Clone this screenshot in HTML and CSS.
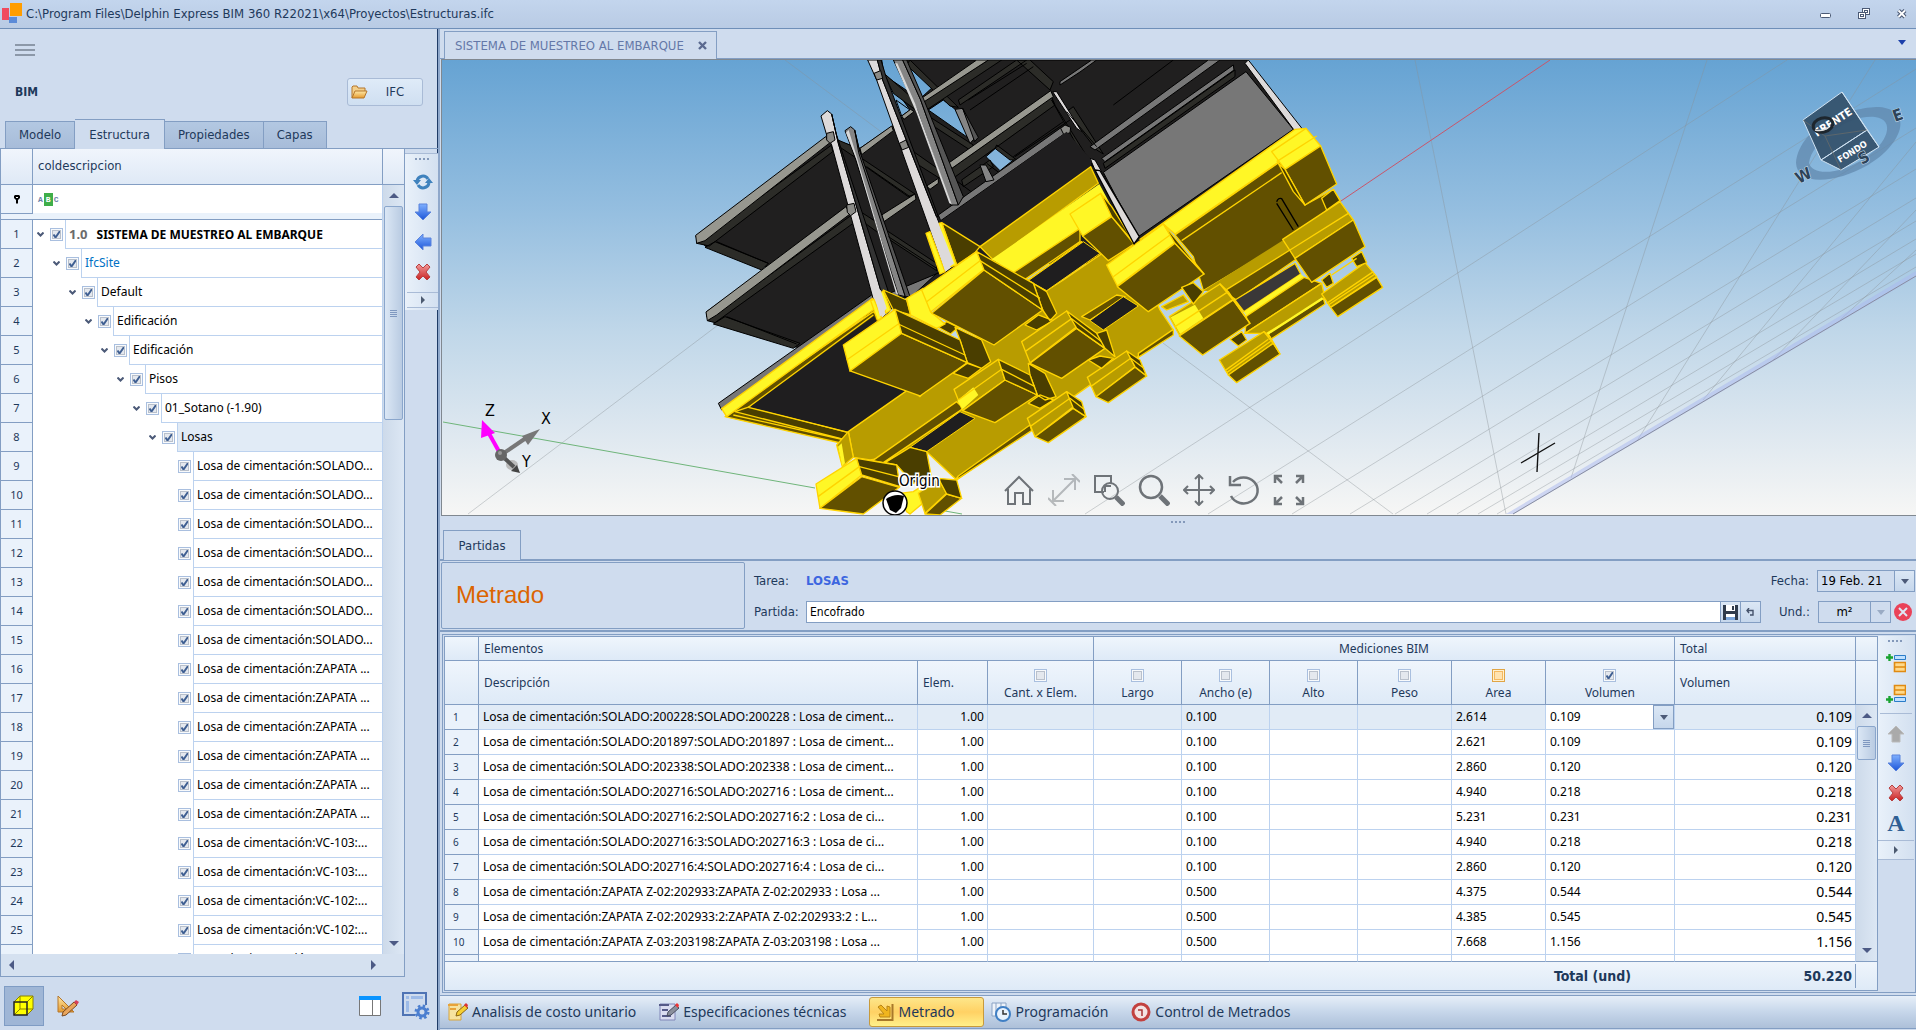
FILE: index.html
```html
<!DOCTYPE html>
<html lang="es">
<head>
<meta charset="utf-8">
<title>Delphin Express BIM 360</title>
<link rel="stylesheet" href="styles.css">
</head>
<body>
<svg class="defs" aria-hidden="true">
  <defs>
    <linearGradient id="blue" x1="0" y1="0" x2="0" y2="1"><stop offset="0" stop-color="#7fb0ff"/><stop offset="1" stop-color="#1c55d8"/></linearGradient>
    <linearGradient id="red" x1="0" y1="0" x2="0" y2="1"><stop offset="0" stop-color="#f29a9a"/><stop offset="1" stop-color="#c92222"/></linearGradient>
    <linearGradient id="gold" x1="0" y1="0" x2="0" y2="1"><stop offset="0" stop-color="#ffe9a8"/><stop offset="1" stop-color="#e59a2e"/></linearGradient>
    <symbol id="i-down" viewBox="0 0 18 18"><path d="M5 1h8v8h4l-8 8-8-8h4z" fill="url(#blue)" stroke="#5b83dc" stroke-width="1"/></symbol>
    <symbol id="i-x" viewBox="0 0 18 18"><path d="M2 4l3-3 4 4 4-4 3 3-4 5 4 5-3 3-4-4-4 4-3-3 4-5z" fill="url(#red)" stroke="#b84040" stroke-width="1" stroke-linejoin="round"/></symbol>
    <symbol id="i-right" viewBox="0 0 6 8"><path d="M1 0l4 4-4 4z" fill="#4c5a70"/></symbol>
  </defs>
</svg>

<header class="titlebar">
  <svg class="logo" viewBox="0 0 22 22" aria-hidden="true"><path d="M1 5h7v12H1z" fill="#f04a5e"/><path d="M9 0h12v13H9z" fill="#ff9d00"/><path d="M8 14h8v6H8z" fill="#5b8bd8"/></svg>
  <h1>C:\Program Files\Delphin Express BIM 360 R22021\x64\Proyectos\Estructuras.ifc</h1>
  <div class="winbtns">
    <button aria-label="Minimizar"><svg width="12" height="12"><rect x=".5" y="5.5" width="10" height="4" rx="1" fill="#fff" stroke="#4b5a75"/></svg></button>
    <button aria-label="Restaurar"><svg width="12" height="12"><g fill="#fff" stroke="#4b5a75"><rect x="4.500" y=".5" width="7" height="6"/><rect x="6.500" y="2.500" width="3" height="2"/><rect x=".5" y="4.500" width="7" height="6"/><rect x="2.500" y="6.500" width="3" height="2"/></g></svg></button>
    <button aria-label="Cerrar"><svg width="12" height="12"><path d="M2.500 2.500l6.500 6.500M9 2.500l-6.500 6.500" stroke="#4b5a75" stroke-width="4"/><path d="M2.500 2.500l6.500 6.500M9 2.500l-6.500 6.500" stroke="#fff" stroke-width="1.800"/></svg></button>
  </div>
</header>

<div class="app">
<aside class="side">
  <button class="burger" aria-label="Menú"><i></i><i></i><i></i></button>
  <div class="side-head">
    <h2>BIM</h2>
    <button class="ifc"><svg width="17" height="14" viewBox="0 0 17 14"><path d="M1 13V2l1-1h4l1 2h7v3" fill="#f3cf8a" stroke="#b5762a"/><path d="M1 13l3-7h12l-3 7z" fill="url(#gold)" stroke="#b5762a"/></svg><span>IFC</span></button>
  </div>
  <nav class="tabs"><button>Modelo</button><button class="on">Estructura</button><button>Propiedades</button><button>Capas</button></nav>
  <div class="side-body">
    <div class="tree">
      <div class="tree-head"><span class="num"></span><span class="col">coldescripcion</span><span class="end"></span></div>
      <div class="tree-main">
        <div class="tree-rows">
          <div class="filter"><span class="num"><svg width="6" height="9" viewBox="0 0 6 9"><path d="M0 1l1-1h4l1 1v2L4 5v3L3 9 2 8V5L0 3z" fill="#000"/><path d="M2 2h2v1H2z" fill="#fff"/></svg></span><span class="abc"><i>A</i><b>B</b><i>C</i></span></div>
          <ul class="rows">
            <li class="l0"><span class="num">1</span><label><button class="tw" aria-label="Contraer"></button><input type="checkbox" checked><span class="t root"><em>1.0</em>SISTEMA DE MUESTREO AL EMBARQUE</span></label></li>
            <li class="l1"><span class="num">2</span><label><button class="tw" aria-label="Contraer"></button><input type="checkbox" checked><span class="t site">IfcSite</span></label></li>
            <li class="l2"><span class="num">3</span><label><button class="tw" aria-label="Contraer"></button><input type="checkbox" checked><span class="t">Default</span></label></li>
            <li class="l3"><span class="num">4</span><label><button class="tw" aria-label="Contraer"></button><input type="checkbox" checked><span class="t">Edificación</span></label></li>
            <li class="l4"><span class="num">5</span><label><button class="tw" aria-label="Contraer"></button><input type="checkbox" checked><span class="t">Edificación</span></label></li>
            <li class="l5"><span class="num">6</span><label><button class="tw" aria-label="Contraer"></button><input type="checkbox" checked><span class="t">Pisos</span></label></li>
            <li class="l6"><span class="num">7</span><label><button class="tw" aria-label="Contraer"></button><input type="checkbox" checked><span class="t">01_Sotano (-1.90)</span></label></li>
            <li class="l7 sel"><span class="num">8</span><label><button class="tw" aria-label="Contraer"></button><input type="checkbox" checked><span class="t">Losas</span></label></li>
            <li class="l8"><span class="num">9</span><label><input type="checkbox" checked><span class="t">Losa de cimentación:SOLADO...</span></label></li>
            <li class="l8"><span class="num">10</span><label><input type="checkbox" checked><span class="t">Losa de cimentación:SOLADO...</span></label></li>
            <li class="l8"><span class="num">11</span><label><input type="checkbox" checked><span class="t">Losa de cimentación:SOLADO...</span></label></li>
            <li class="l8"><span class="num">12</span><label><input type="checkbox" checked><span class="t">Losa de cimentación:SOLADO...</span></label></li>
            <li class="l8"><span class="num">13</span><label><input type="checkbox" checked><span class="t">Losa de cimentación:SOLADO...</span></label></li>
            <li class="l8"><span class="num">14</span><label><input type="checkbox" checked><span class="t">Losa de cimentación:SOLADO...</span></label></li>
            <li class="l8"><span class="num">15</span><label><input type="checkbox" checked><span class="t">Losa de cimentación:SOLADO...</span></label></li>
            <li class="l8"><span class="num">16</span><label><input type="checkbox" checked><span class="t">Losa de cimentación:ZAPATA ...</span></label></li>
            <li class="l8"><span class="num">17</span><label><input type="checkbox" checked><span class="t">Losa de cimentación:ZAPATA ...</span></label></li>
            <li class="l8"><span class="num">18</span><label><input type="checkbox" checked><span class="t">Losa de cimentación:ZAPATA ...</span></label></li>
            <li class="l8"><span class="num">19</span><label><input type="checkbox" checked><span class="t">Losa de cimentación:ZAPATA ...</span></label></li>
            <li class="l8"><span class="num">20</span><label><input type="checkbox" checked><span class="t">Losa de cimentación:ZAPATA ...</span></label></li>
            <li class="l8"><span class="num">21</span><label><input type="checkbox" checked><span class="t">Losa de cimentación:ZAPATA ...</span></label></li>
            <li class="l8"><span class="num">22</span><label><input type="checkbox" checked><span class="t">Losa de cimentación:VC-103:...</span></label></li>
            <li class="l8"><span class="num">23</span><label><input type="checkbox" checked><span class="t">Losa de cimentación:VC-103:...</span></label></li>
            <li class="l8"><span class="num">24</span><label><input type="checkbox" checked><span class="t">Losa de cimentación:VC-102:...</span></label></li>
            <li class="l8"><span class="num">25</span><label><input type="checkbox" checked><span class="t">Losa de cimentación:VC-102:...</span></label></li>
            <li class="l8"><span class="num"></span><label><input type="checkbox" checked><span class="t">Losa de cimentación:VC-101:...</span></label></li>
          </ul>
        </div>
        <div class="vscroll"><i class="up"></i><div class="thumb tall"><i></i></div><i class="dn"></i></div>
      </div>
      <div class="hscroll"><i class="lf"></i><i class="rt"></i></div>
    </div>
    <div class="tools" role="toolbar">
      <span class="grip"></span>
      <button aria-label="Actualizar"><svg width="20" height="16" viewBox="0 0 20 16"><g fill="none" stroke="#3f82bd" stroke-width="3"><path d="M4 7a6 6 0 0 1 11-2"/><path d="M16 9a6 6 0 0 1-11 2"/></g><path d="M0 6h8l-4 5zM12 9h8l-4-5z" fill="#3f82bd"/></svg></button>
      <button aria-label="Bajar"><svg width="18" height="18"><use href="#i-down"/></svg></button>
      <button aria-label="Izquierda"><svg width="18" height="18" viewBox="0 0 18 18"><path d="M17 5v8H9v4L1 9l8-8v4z" fill="url(#blue)" stroke="#5b83dc"/></svg></button>
      <button aria-label="Eliminar"><svg width="18" height="18"><use href="#i-x"/></svg></button>
      <button class="more" aria-label="Más"><svg width="6" height="8"><use href="#i-right"/></svg></button>
    </div>
  </div>
  <footer class="side-foot">
    <button class="pressed" aria-label="Vista 3D"><svg width="22" height="22" viewBox="0 0 22 22"><path d="M1 7l6-6h13v13l-6 6H1z" fill="#ff0"/><path d="M1 7l6-6h13v13l-6 6M14 7l6-6M7 1v13h13M7 14l-6 6" fill="none" stroke="#8a8200"/><path d="M1 7h13v13H1z" fill="none" stroke="#222" stroke-width="1.500"/></svg></button>
    <button aria-label="Diseño"><svg width="22" height="22" viewBox="0 0 22 22"><path d="M1 1l16 16H1z" fill="url(#gold)" stroke="#b5762a"/><path d="M5 10l4 4H5z" fill="#cfdcee" stroke="#b5762a"/><path d="M5 21l1-4L17 7l3 3L9 20z" fill="#e9a55c" stroke="#7a4a20"/><path d="M17 7l2-2 3 2-2 3z" fill="#d8405a"/></svg></button>
    <span class="sp"></span>
    <button aria-label="Columnas"><svg width="22" height="20" viewBox="0 0 22 20"><path d="M.5.5h21v19H.5zM13.500 3v17" fill="#fff" stroke="#777"/><path d="M0 0h22v4H0z" fill="#0a94ff"/></svg></button>
    <button aria-label="Configurar"><svg width="28" height="28" viewBox="0 0 28 28"><path d="M13 23H1V1h23v12" fill="none" stroke="#4f74b5" stroke-width="2"/><path d="M4 4h3v3H4zM9 4h12v3H9zM4 9h3v11H4z" fill="#9dbbe8"/><circle cx="20" cy="20" r="4" fill="none" stroke="#4c7fd0" stroke-width="3"/><circle cx="20" cy="20" r="6" fill="none" stroke="#4c7fd0" stroke-width="3" stroke-dasharray="2.400 2.310"/></svg></button>
  </footer>
</aside>

<main class="main">
  <div class="doctabs"><button class="doctab">SISTEMA DE MUESTREO AL EMBARQUE <svg width="9" height="9"><path d="M1 1l7 7M8 1l-7 7" stroke="#5b6a90" stroke-width="2.400"/></svg></button><span class="sp"></span><i class="caret navy"></i></div>
  <section class="view">
    <svg class="scene" viewBox="442 60 1474 455" preserveAspectRatio="xMidYMid slice" role="img" aria-label="Modelo 3D">
      <defs><linearGradient id="sky" gradientUnits="userSpaceOnUse" x1="0" y1="60" x2="0" y2="514"><stop offset="0" stop-color="#66a3d3"/><stop offset=".34" stop-color="#96bfe0"/><stop offset=".6" stop-color="#c0d7e9"/><stop offset=".8" stop-color="#dbe6ef"/><stop offset="1" stop-color="#f6f6f5"/></linearGradient>
      <linearGradient id="skyA" gradientUnits="userSpaceOnUse" x1="0" y1="30" x2="0" y2="1392"><stop offset="0" stop-color="#66a3d3"/><stop offset=".34" stop-color="#96bfe0"/></linearGradient></defs>
      <rect x="442" y="60" width="1474" height="455" fill="url(#sky)"/>
      <g fill="none" stroke="#8a9196" stroke-opacity=".4">
        <path d="M468 514L718 325M785 60L1026 240M1415 60L1440 184 1506 514M1163 343L1393 514M1707 60L1571 478M1875 60L1637 441M1916 142L1703 400M1916 210L1773 360M1916 250L1840 320"/>
        <path d="M1787 60L1085 514M1916 69L1208 514M1916 128L1292 514M1916 169L1350 514M1916 198L1395 514M1916 221L1427 514M1916 239L1457 514M1916 254L1478 514M1916 267L1497 514"/>
      </g>
      <path d="M1916 271L1506 514h8L1916 277z" fill="#a9b8f0" opacity=".5"/>
      <path d="M1916 276L1513 514" stroke="#888da0"/>
      <path d="M1550 60L1338 203" stroke="#c8566a"/>
      <path d="M443 422L815 488M945 511L962 514" stroke="#6fb57a"/>
      <g transform="translate(680 50) scale(.33333)" stroke-linejoin="round">
        <g stroke="#000" stroke-width="3">
          <path fill="#201f1f" d="M47 560L440 262 540 295 635 230 690 180 640 110 600 60 590 30H1700L1865 240 1300 640 900 640 680 742 350 892 125 820 80 800 80 785 262 652 78 590z"/>
          <g fill="url(#skyA)">
            <path d="M605 28H642L700 135 612 75zM682 42L762 108 725 142zM648 150L690 180 665 198zM745 180L790 150 828 180 868 266zM918 320L950 292 1000 330 960 362z"/>
          </g>
          <g fill="#2c2c28">
            <path d="M75 592L105 575 265 640 245 660zM100 822L135 800 360 880 340 895zM50 580L455 285 458 305 88 588zM82 812L515 495 522 518 105 818z"/>
            <path d="M455 262L545 300 530 325 470 285zM515 468L608 528 590 545 535 505zM612 70L715 160 710 182 640 130zM672 285L808 380 795 395 700 335zM545 325L705 432 685 440 550 345zM610 535L770 640 770 662 615 560zM725 185L880 285 870 300 740 215zM690 30L835 172 810 168 680 45z"/>
            <path d="M722 160L925 30H965L735 183zM800 366L1115 142 1125 165 815 388zM840 165L1040 30H1010L835 150zM1010 30L1110 120 1120 95 1050 30zM950 285L1010 330 990 330 945 295zM1115 150L1240 350 1215 330zM845 390L930 330 940 350 850 410zM870 180L1060 50M1005 320L1170 210M1160 185L1250 300 1270 312 1180 170zM820 385L880 430M920 340L960 370"/>
          </g>
          <g fill="#97978f">
            <path d="M47 556L437 260 450 278 75 572 50 580zM78 786L498 470 510 492 110 795 82 812zM540 295L635 228 640 242 545 314zM665 198L692 178 702 185 672 208zM605 495L705 432 708 448 612 515zM740 408L775 385 775 400 750 418zM720 148L890 30H925L722 162zM795 347L1112 122 1120 140 800 366z"/>
          </g>
          <g fill="#777">
            <path d="M775 495L1150 228 1172 238 782 512zM115 1060L575 735 680 742 700 735 770 670 785 665 580 750 125 1080zM1230 290L1585 30H1620L1245 300zM1265 325L1660 45 1662 60 1275 335zM1140 105L1200 66 1250 30H1235L1140 95z"/>
          </g>
          <path fill="#2c2c28" d="M1275 355L1665 80 1665 60 1270 340z"/>
          <path fill="#777" d="M1270 367L1698 65 1840 238 1372 562z"/>
          <g fill="#858585"><path d="M495 242L512 230 524 240 540 308 676 740 655 735 525 322z"/><path d="M640 30H668L722 150 835 465 812 465 712 182z"/><path d="M825 178L848 175 884 265 870 280zM900 345L918 345 942 390 918 395z"/></g>
          <g fill="#555"><path d="M524 240L538 300 690 740 676 740 536 308zM668 30H680L732 150 850 440 835 465 722 150zM848 175L895 262 884 275z"/></g>
          <g fill="#dddada"><path d="M423 198L442 182 455 192 475 280 622 790 597 812 455 285 440 255z"/><path d="M563 30H592L608 90 826 645 795 668 590 90z"/><path d="M1118 125L1130 125 1205 245 1190 235zM1230 325L1245 330 1378 562 1362 580 1245 360zM1695 40L1705 30 1868 238 1842 240z"/></g>
          <path fill="#d8d8d8" stroke="none" d="M498 248L506 240 545 370 640 690 655 735 648 730 530 330zM645 40H652L705 160 815 463 808 460 710 190z"/>
          <g fill="#333"><path d="M455 192L468 250 640 770 622 790 475 280zM592 30H603L618 80 775 500 770 500 608 90z"/></g>
          <g fill="#8a8a86"><path d="M440 250L460 245 465 270 450 280 440 270zM500 465L522 460 528 485 512 497 502 487zM582 70L602 62 608 85 590 90zM658 280L678 270 686 292 666 300zM1142 235L1155 225 1172 232 1170 248 1152 255z"/></g>
          <path d="M110 575L265 640M140 800L350 882M865 150L1040 40M1000 320L1150 215M1300 165L1480 30M1160 185L1250 290M560 350L690 440M625 560L770 655" fill="none"/>
        </g>
        <path fill="#1f1e1f" d="M780 515L1160 245 1235 330 1232 350 900 588 785 520z"/>
        <g stroke="#ffd400" stroke-width="4">
          <path fill="#625000" d="M135 1100L175 1068 580 785 600 800 505 1150 495 1182z"/>
          <path fill="#fff726" d="M125 1076L578 745 582 778 140 1100z"/>
          <path fill="#4a3e00" d="M165 1085L210 1070 505 1148 498 1170z"/>
          <path fill="#1f1e1f" stroke="none" d="M208 1072L582 798 690 1020 505 1145z"/>
          <path fill="none" d="M205 1072L580 795M205 1072L505 1147M160 1095L495 1170"/>
          <path fill="#b89c00" d="M505 1145L690 1015 720 1040 900 850 1150 690 1340 560 1440 780 1480 840 1375 920 1280 970 1050 1132 830 1290 740 1205 570 1230 520 1222z"/>
          <path fill="#625000" d="M578 1232L830 1055 850 1075 610 1238zM1045 690L1205 575 1210 590 1060 700zM1205 800L1310 735 1335 740 1230 810zM1050 1125L835 1278 825 1292 1055 1142zM1375 910L1480 838 1480 855 1375 922z"/>
          <path fill="#1f1e1f" stroke-width="3" d="M690 1192L840 1085 885 1105 740 1205zM1045 692L1210 575 1260 610 1100 722zM1230 812L1330 740 1375 768 1270 840z"/>
          <path fill="#b89c00" d="M900 590L1232 350 1255 400 940 630z"/>
          <path fill="#fff726" stroke="none" d="M935 628L1258 402 1300 480 1200 535 1000 668z"/>
          <path fill="#625000" d="M1000 668L1200 535 1200 575 1030 692z"/>
          <path fill="#4a3e00" d="M785 518L900 590 885 608 830 645zM610 720L680 750 692 795 640 780zM825 832L905 870 932 935 905 955 862 938 840 870zM775 832L800 815 835 832 812 852zM1040 688L1100 725 1130 790 1110 812 1088 780 1060 700zM1045 940L1095 970 1128 1040 1095 1050 1072 1035 1050 975zM820 970L862 940 905 955 865 985zM1035 825L1075 795 1120 812 1070 840zM1045 1060L1080 1035 1120 1050 1080 1075z"/>
          <path fill="#fff726" d="M738 550L750 545 795 665 780 672zM785 518L830 645 812 650 776 520zM572 752L582 748 605 805 592 810zM610 722L632 780 618 790 600 730zM680 745L730 715 752 785 795 822 770 835 692 795z"/>
          <path fill="#fff726" d="M490 885L645 778 665 850 510 963zM725 720L890 605 912 658 752 786z"/>
          <path fill="#625000" d="M510 963L665 850 862 938 720 1038zM755 790L912 660 1088 780 942 885z"/>
          <path fill="#4a3e00" d="M645 778L840 870 862 938 665 850zM890 605L1060 700 1088 780 912 660z"/>
          <path fill="none" d="M500 930L655 822 855 915M740 755L900 632 1080 745"/>
          <path fill="#b89c00" d="M1025 875L1160 783 1190 830 1050 938zM822 1018L955 928 975 990 848 1082zM1042 1105L1160 1025 1180 1070 1065 1160zM1222 982L1340 903 1365 950 1248 1040zM470 1185L505 1145 520 1222 487 1250z"/>
          <path fill="#fff726" stroke="none" d="M832 1052L880 1012 895 1035 848 1078zM474 1190L485 1180 495 1240 487 1248z"/>
          <path fill="#625000" d="M1050 940L1190 835 1275 895 1145 985zM848 1082L975 990 1072 1035 945 1118zM1065 1160L1180 1075 1218 1100 1105 1178zM1248 1040L1365 952 1400 978 1285 1058z"/>
          <path fill="#4a3e00" d="M1160 783L1250 850 1275 895 1190 835zM955 928L1050 975 1072 1035 975 990zM1160 1025L1205 1055 1218 1100 1180 1075zM1340 903L1380 930 1400 978 1365 950zM1250 850L1280 840 1305 920 1275 895zM1225 930L1260 918 1300 925 1265 955z"/>
          <path fill="none" d="M835 1050L965 958 1065 1010M1035 905L1175 806 1265 875M1050 1130L1170 1045 1212 1078M1232 1010L1352 925 1392 955"/>
          <path fill="#4a3e00" d="M615 1238L690 1192 740 1205 755 1285 700 1300 650 1245z"/>
          <path fill="#fff726" d="M408 1302L530 1225 545 1275 420 1375zM660 1330L700 1325 755 1290 740 1350 690 1392 680 1385z"/>
          <path fill="#b89c00" d="M715 1330L775 1285 800 1330 735 1390z"/>
          <path fill="#625000" d="M420 1375L545 1280 658 1312 550 1392zM735 1392L800 1332 845 1345 780 1395z"/>
          <path fill="#4a3e00" d="M530 1225L650 1245 660 1310 545 1275zM775 1285L830 1290 845 1345 800 1332z"/>
          <path fill="none" d="M414 1340L538 1250 655 1280"/>
          <g transform="translate(1140 0)">
            <path fill="#fff726" d="M30 492L122 430 155 498 68 558z"/>
            <path fill="#625000" d="M68 558L155 500 222 582 145 632z"/>
            <path fill="#625000" d="M345 555L660 335 735 465 820 418 840 450 700 560 430 722 400 620z"/>
            <path fill="#b89c00" stroke="none" d="M430 722L670 570 800 480 715 560 720 620 490 725z"/>
            <path fill="#625000" d="M490 725L690 600 720 620 530 750z"/>
            <path fill="#fff726" d="M240 568L705 238 738 235 665 330 345 552 310 522z"/>
            <path fill="none" d="M365 572L665 368"/>
            <path fill="#3a3838" d="M525 750L705 640 722 672 552 785z"/>
            <path fill="#fff726" stroke="none" d="M552 785L722 672 732 680 560 798z"/>
            <path fill="#625000" d="M560 798L732 682 785 700 555 850z"/>
            <path fill="#b89c00" d="M555 850L785 700 795 745 620 850z"/>
            <path fill="#625000" d="M625 850L790 745 795 762 632 868z"/>
            <path fill="none" stroke="#fff726" stroke-width="7" d="M622 852L788 745"/>
            <path fill="#fff726" d="M140 645L310 522 345 578 172 708zM635 305L738 235 782 288 675 358z"/>
            <path fill="#625000" d="M172 710L345 580 432 672 265 785zM675 358L782 288 830 402 735 465z"/>
            <path fill="#4a3e00" d="M310 522L350 570 432 672 345 580zM655 340L675 358 735 465 700 425zM122 430L155 470 225 582 155 500z"/>
            <path fill="none" d="M160 680L330 555M650 335L770 258"/>
            <path fill="#b89c00" d="M668 568L840 455 880 510 705 625zM785 732L915 638 950 680 812 772zM478 930L612 845 640 880 505 975zM328 800L480 702 520 748 358 855zM305 770L370 735 385 755 320 780z"/>
            <path fill="#fff726" stroke="none" d="M332 802L405 764 430 805 360 852z"/>
            <path fill="#625000" d="M705 625L880 510 915 590 755 697zM812 772L950 682 968 712 833 800zM505 975L640 880 660 912 530 998zM358 858L520 750 570 820 428 915z"/>
            <path fill="#4a3e00" d="M480 702L505 725 570 820 520 750zM612 845L630 860 660 912 640 880zM875 625L905 605 920 638 890 650zM365 712L400 698 430 725 400 762zM510 868L545 845 560 870 535 888zM785 690L810 670 820 700 800 712zM785 445L820 418 840 452 800 480z"/>
            <path fill="none" d="M345 830L500 728M690 600L865 490M800 760L940 665M805 765L945 672M495 962L625 868M500 968L632 874M815 675L890 625"/>
            <path fill="none" stroke="#000" d="M650 455Q655 442 665 446L715 530M650 460L700 540"/>
          </g>
          <path fill="#dddada" stroke="#000" d="M1245 360L1260 362 1378 560 1362 582z"/>
          <path fill="#dddada" stroke="none" d="M745 500L768 500 822 640 795 663zM578 715L602 720 620 775 600 800z"/>
        </g>
      </g>
      <g>
        <path d="M501 455L487 430" stroke="#f0f" stroke-width="4"/><path d="M482 420l-1 18 14-5z" fill="#f0f"/>
        <path d="M501 455L526 438" stroke="#777" stroke-width="4"/><path d="M540 429l-18 7 6 9z" fill="#777"/>
        <ellipse cx="512" cy="465" rx="6" ry="5" fill="#bbb"/><path d="M501 455L514 467" stroke="#555" stroke-width="4"/><path d="M520 473l-9-2 6-6z" fill="#444"/>
        <circle cx="501" cy="455" r="6" fill="#666"/><circle cx="500" cy="453" r="2" fill="#999"/>
        <text x="485" y="416" class="ax">Z</text><text x="541" y="424" class="ax">X</text><text x="522" y="467" class="ax">Y</text>
        <circle cx="895" cy="503" r="12" fill="#fff" stroke="#000" stroke-width="1.500"/><path d="M886 499q9-6 18-3l-3 12-5 5-6-3z" fill="#000"/>
        <text x="899" y="486" class="og">Origin</text>
        <path d="M1521 463L1555 443M1539 433L1537 472" stroke="#111" stroke-width="1.400"/>
      </g>
      <g>
        <path fill="#5f86ab" fill-opacity=".7" fill-rule="evenodd" d="M1796 163C1800 125 1850 107 1879 107 1915 110 1902 145 1868 165 1835 184 1797 186 1796 163zM1809 163C1812 176 1840 175 1865 158 1888 143 1896 120 1875 117 1850 114 1812 140 1809 163z"/>
        <g fill="#33506a" fill-opacity=".92" stroke="#cfe2f2" stroke-linejoin="round"><path d="M1803 120L1842 92 1867 130 1821 160zM1821 160L1867 130 1879 147 1841 170z"/></g>
        <path d="M1842 92L1879 147" stroke="#cfe2f2"/>
        <path d="M1803 120L1825 136 1867 130M1825 136L1841 170" stroke="#6c6c68" fill="none" opacity=".7"/>
        <text transform="translate(1817 137) rotate(-33)" class="cube">FRENTE</text>
        <text transform="translate(1840 163) rotate(-32)" class="cube sm">FONDO</text>
        <ellipse cx="1823" cy="125" rx="10" ry="7" transform="rotate(-15 1823 125)" fill="none" stroke="#1d262e" stroke-width="3"/><path d="M1815 130q8 2 14-3" fill="none" stroke="#ddd" stroke-width="1.500"/>
        <g class="nesw"><text transform="translate(1895 122) rotate(-20)">E</text><text transform="translate(1862 165) rotate(-30)">S</text><text transform="translate(1799 184) rotate(-28)">W</text></g>
      </g>
    </svg>
    <div class="nav3d">
      <button aria-label="Inicio"><svg viewBox="0 0 32 32"><path d="M2 17L16 3l14 14M5 15v15h7V19h8v11h7V15" /></svg></button>
      <button class="dim" aria-label="Ajustar"><svg viewBox="0 0 32 32"><path d="M5 27L27 5M16 5h11v11M5 16v11h11M24 0l8 8M0 24l8 8"/></svg></button>
      <button aria-label="Zoom ventana"><svg viewBox="0 0 32 32"><path d="M11 18H2V2h16v7M12 18v-6h6"/><circle cx="17" cy="17" r="8"/><path class="b" d="M23 23l8 8"/></svg></button>
      <button aria-label="Zoom"><svg viewBox="0 0 32 32"><circle cx="13" cy="13" r="11" class="n"/><path class="b" d="M22 22l9 9"/></svg></button>
      <button aria-label="Mover"><svg viewBox="0 0 32 32"><path d="M16 1v30M1 16h30M12 5l4-4 4 4M12 27l4 4 4-4M5 12l-4 4 4 4M27 12l4 4-4 4"/></svg></button>
      <button aria-label="Girar"><svg viewBox="0 0 32 32"><path d="M5 8a14 13 0 1 1-2 14" class="n"/><path d="M2 2v9h11" class="n"/></svg></button>
      <button aria-label="Pantalla completa"><svg viewBox="0 0 32 32"><path d="M2 9V2h7M2 2l7 7M23 2h7v7M30 2l-7 7M2 23v7h7M2 30l7-7M30 23v7h-7M30 30l-7-7" class="n"/></svg></button>
    </div>
  </section>
  <div class="split"><span class="grip"></span></div>
  <div class="lowtabs"><button>Partidas</button></div>
  <section class="form">
    <div class="group"><h2>Metrado</h2></div>
    <div class="fields">
      <div class="line"><span class="lab">Tarea:</span><strong>LOSAS</strong><span class="sp"></span><label for="fecha" class="r">Fecha:</label>
        <span class="combo w-date"><input id="fecha" value="19 Feb. 21"><button aria-label="Abrir"><i class="caret"></i></button></span></div>
      <div class="line"><label for="partida" class="lab">Partida:</label><span class="combo grow"><input id="partida" value="Encofrado"><button aria-label="Guardar"><svg width="15" height="15" viewBox="0 0 15 15"><path d="M0 0h15v15H0z" fill="#2f3b4c"/><path d="M3 0h9v6H3zM3 9h9v6H3z" fill="#fff"/><path d="M9 1h2v4H9z" fill="#2f3b4c"/><path d="M3 12h9v3H3z" fill="#7ba6dc"/></svg></button><button aria-label="Deshacer"><svg width="9" height="9" viewBox="0 0 9 9"><path d="M3 0L1 2.500 3 5M1 2.500h6V7H4" fill="none" stroke="#44526b" stroke-width="1.400"/></svg></button></span><label for="und" class="r und">Und.:</label>
        <span class="combo w-und"><input id="und" value="m²"><button aria-label="Abrir"><i class="caret off"></i></button></span><button class="err" aria-label="Quitar"><svg width="18" height="18" viewBox="0 0 18 18"><circle cx="9" cy="9" r="9" fill="#ea4258"/><path d="M5 5l8 8M13 5l-8 8" stroke="#dfe7f4" stroke-width="2"/></svg></button></div>
    </div>
  </section>
  <section class="gridbox">
    <table class="grid">
      <colgroup><col class="c34"><col><col class="c70"><col class="c106"><col class="c88"><col class="c88"><col class="c88"><col class="c94"><col class="c94"><col class="c129"><col class="c181"><col class="c22"></colgroup>
      <thead>
        <tr class="h1"><th></th><th colspan="3" class="l">Elementos</th><th colspan="6">Mediciones BIM</th><th class="l">Total</th><th></th></tr>
        <tr class="h2"><th></th><th class="l">Descripción</th><th class="l s">Elem.</th><th><label><input type="checkbox">Cant. x Elem.</label></th><th><label><input type="checkbox">Largo</label></th><th><label><input type="checkbox">Ancho (e)</label></th><th><label><input type="checkbox">Alto</label></th><th><label><input type="checkbox">Peso</label></th><th><label><input type="checkbox" class="hot">Area</label></th><th><label><input type="checkbox" checked>Volumen</label></th><th class="l">Volumen</th><th></th></tr>
      </thead>
      <tbody>
        <tr class="sel"><th>1</th><td>Losa de cimentación:SOLADO:200228:SOLADO:200228 : Losa de ciment...</td><td class="n">1.00</td><td></td><td></td><td>0.100</td><td></td><td></td><td>2.614</td><td class="edit"><span><input value="0.109" aria-label="Volumen"><button aria-label="Abrir"><i class="caret"></i></button></span></td><td class="tot">0.109</td><td class="sb" rowspan="11"><div class="vscroll"><i class="up"></i><div class="thumb short"><i></i></div><i class="dn"></i></div></td></tr>
        <tr><th>2</th><td>Losa de cimentación:SOLADO:201897:SOLADO:201897 : Losa de ciment...</td><td class="n">1.00</td><td></td><td></td><td>0.100</td><td></td><td></td><td>2.621</td><td>0.109</td><td class="tot">0.109</td></tr>
        <tr><th>3</th><td>Losa de cimentación:SOLADO:202338:SOLADO:202338 : Losa de ciment...</td><td class="n">1.00</td><td></td><td></td><td>0.100</td><td></td><td></td><td>2.860</td><td>0.120</td><td class="tot">0.120</td></tr>
        <tr><th>4</th><td>Losa de cimentación:SOLADO:202716:SOLADO:202716 : Losa de ciment...</td><td class="n">1.00</td><td></td><td></td><td>0.100</td><td></td><td></td><td>4.940</td><td>0.218</td><td class="tot">0.218</td></tr>
        <tr><th>5</th><td>Losa de cimentación:SOLADO:202716:2:SOLADO:202716:2 : Losa de ci...</td><td class="n">1.00</td><td></td><td></td><td>0.100</td><td></td><td></td><td>5.231</td><td>0.231</td><td class="tot">0.231</td></tr>
        <tr><th>6</th><td>Losa de cimentación:SOLADO:202716:3:SOLADO:202716:3 : Losa de ci...</td><td class="n">1.00</td><td></td><td></td><td>0.100</td><td></td><td></td><td>4.940</td><td>0.218</td><td class="tot">0.218</td></tr>
        <tr><th>7</th><td>Losa de cimentación:SOLADO:202716:4:SOLADO:202716:4 : Losa de ci...</td><td class="n">1.00</td><td></td><td></td><td>0.100</td><td></td><td></td><td>2.860</td><td>0.120</td><td class="tot">0.120</td></tr>
        <tr><th>8</th><td>Losa de cimentación:ZAPATA Z-02:202933:ZAPATA Z-02:202933 : Losa ...</td><td class="n">1.00</td><td></td><td></td><td>0.500</td><td></td><td></td><td>4.375</td><td>0.544</td><td class="tot">0.544</td></tr>
        <tr><th>9</th><td>Losa de cimentación:ZAPATA Z-02:202933:2:ZAPATA Z-02:202933:2 : L...</td><td class="n">1.00</td><td></td><td></td><td>0.500</td><td></td><td></td><td>4.385</td><td>0.545</td><td class="tot">0.545</td></tr>
        <tr><th>10</th><td>Losa de cimentación:ZAPATA Z-03:203198:ZAPATA Z-03:203198 : Losa ...</td><td class="n">1.00</td><td></td><td></td><td>0.500</td><td></td><td></td><td>7.668</td><td>1.156</td><td class="tot">1.156</td></tr>
        <tr class="cut"><th></th><td></td><td></td><td></td><td></td><td></td><td></td><td></td><td></td><td></td><td></td></tr>
      </tbody>
      <tfoot><tr><td colspan="9"></td><td>Total (und)</td><td class="sum"><span>50.220</span></td><td></td></tr></tfoot>
    </table>
    <div class="tools" role="toolbar">
      <span class="grip"></span>
      <button aria-label="Insertar arriba"><svg width="20" height="19" viewBox="0 0 20 19"><path d="M8.500 1.500h11v4h-11z" fill="#bfe0ff" stroke="#2a7cc8"/><path d="M8.500 8.500h11v9h-11zM8.500 13h11" fill="#ffd98a" stroke="#e08a12" stroke-width="1.600"/><path d="M0 3.500h7M3.500 0v7" stroke="#19a330" stroke-width="2.400"/></svg></button>
      <button aria-label="Insertar abajo"><svg width="20" height="19" viewBox="0 0 20 19"><path d="M8.500 13.500h11v4h-11z" fill="#bfe0ff" stroke="#2a7cc8"/><path d="M8.500 1.500h11v9h-11zM8.500 6h11" fill="#ffd98a" stroke="#e08a12" stroke-width="1.600"/><path d="M0 15.500h7M3.500 12v7" stroke="#19a330" stroke-width="2.400"/></svg></button>
      <hr>
      <button aria-label="Subir"><svg width="18" height="18" viewBox="0 0 18 18"><path d="M9 1l8 8h-4v8H5V9H1z" fill="#aaa" stroke="#bbb"/></svg></button>
      <button aria-label="Bajar"><svg width="18" height="18"><use href="#i-down"/></svg></button>
      <button aria-label="Eliminar"><svg width="18" height="18"><use href="#i-x"/></svg></button>
      <button class="font-a" aria-label="Fuente">A</button>
      <button class="more" aria-label="Más"><svg width="6" height="8"><use href="#i-right"/></svg></button>
    </div>
  </section>
  <nav class="bottom">
    <button><svg width="20" height="18" viewBox="0 0 20 18"><path d="M1 1h12v16H1z" fill="#f6e3a0" stroke="#d9a53a"/><path d="M0 2h10M2 6h6" stroke="#e8a33a" stroke-width="2"/><path d="M8 13l1-4 8-7 3 3-8 7z" fill="#f5cf30" stroke="#8a6414"/><path d="M16 2l2-2 2 2-1 3z" fill="#d33"/></svg>Analisis de costo unitario</button>
    <button><svg width="20" height="18" viewBox="0 0 20 18"><path d="M1 1h15v16H1z" fill="#d9dcf0" stroke="#8086b8"/><path d="M0 2h10M3 7h6M3 13h9" stroke="#555a88" stroke-width="2"/><path d="M8 13l1-4 8-7 3 3-8 7z" fill="#8a8f9c" stroke="#4a4f60"/><path d="M16 2l2-2 2 2-1 3z" fill="#e33"/></svg>Especificaciones técnicas</button>
    <button class="on"><svg width="18" height="18" viewBox="0 0 18 18"><path d="M16.500 1v16H1" fill="none" stroke="#a8782a" stroke-width="2"/><path d="M2 4l3-2 6 6V3l3 1v10H4l-1-3h5z" fill="#f0b51e" stroke="#b98516"/></svg>Metrado</button>
    <button><svg width="20" height="20" viewBox="0 0 20 20"><path d="M1 1h14v13H1zM5 1v13M10 1v13" fill="#eef3fa" stroke="#8aa3c4"/><circle cx="12" cy="12" r="7" fill="#e8f2fd" stroke="#3f7fc4" stroke-width="2"/><path d="M12 8v4h4" fill="none" stroke="#333" stroke-width="1.500"/></svg>Programación</button>
    <button><svg width="20" height="20" viewBox="0 0 20 20"><circle cx="10" cy="10" r="8" fill="#f3e3e3" stroke="#c2413f" stroke-width="3"/><path d="M7 8h4v6" fill="none" stroke="#a33" stroke-width="1.500"/></svg>Control de Metrados</button>
  </nav>
</main>
</div>
</body>
</html>
```
FILE: styles.css
```css
* { box-sizing: border-box; }
body { margin: 0; height: 100vh; min-width: 1200px; display: flex; flex-direction: column; overflow: hidden; background: #cfdcee; color: #1e395b; font: 13px/16px "DejaVu Sans Condensed", "Noto Sans", sans-serif; }
button, input { font: inherit; color: inherit; }
button { padding: 0; border: 0; background: none; display: inline-flex; align-items: center; justify-content: center; }
h1, h2 { margin: 0; font-weight: normal; }
ul { list-style: none; margin: 0; padding: 0; }
.defs { position: absolute; width: 0; height: 0; }
.sp { flex: 1; }

/* Title bar */
.titlebar { flex: none; height: 29px; display: flex; align-items: center; padding: 0 8px 0 1px; background: linear-gradient(#c3d5ed, #b9cbe4); border-bottom: 1px solid #6f8fb8; }
.logo { width: 22px; height: 22px; margin-right: 3px; }
.titlebar h1 { flex: 1; font-size: 13px; }
.winbtns { display: flex; gap: 26px; }

.app { flex: 1; min-height: 0; display: flex; }

/* Shared check box */
input[type=checkbox] { appearance: none; margin: 0; width: 13px; height: 13px; flex: none; border: 1px solid #a9bfdf; background: #e4e8ee; box-shadow: inset 0 0 0 1px #f8fafc, inset 0 0 0 2px #b9c0cb; }
input[type=checkbox]:checked { background: #e4e8ee url("data:image/svg+xml,%3Csvg xmlns='http://www.w3.org/2000/svg' width='11' height='11'%3E%3Cpath d='M2.500 5.500l2 3L9 2' fill='none' stroke='%233f5f92' stroke-width='2'/%3E%3C/svg%3E") center no-repeat; }
input[type=checkbox].hot { border-color: #e0a545; background: #ffe3b0; box-shadow: inset 0 0 0 1px #fff0cf, inset 0 0 0 2px #f5b960; }
.caret { display: block; border: 4px solid transparent; border-top: 5px solid #4c5a78; border-bottom: 0; }
.caret.navy { border-top-color: #1b3faa; }
.caret.off { border-top-color: #9aabc4; }
.grip { width: 16px; height: 2px; background: repeating-linear-gradient(90deg, #8499ba 0 2px, transparent 2px 4px); }

/* Side panel */
.side { flex: none; width: 440px; display: flex; flex-direction: column; border-right: 2px solid #8fa8cb; box-shadow: inset -1px 0 #1f3b66; }
.burger { width: 20px; margin: 15px 0 0 15px; display: flex; flex-direction: column; gap: 3px; }
.burger i { width: 20px; height: 2px; background: #8c98a8; }
.side-head { display: flex; justify-content: space-between; align-items: center; padding: 22px 15px 11px 15px; }
.side-head h2 { font-size: 12px; font-weight: bold; }
.ifc { width: 76px; height: 28px; padding-left: 3px; border: 1px solid #a9bbd6; border-radius: 3px; background: linear-gradient(#dfebf8, #cfdff1); justify-content: flex-start; }
.ifc span { flex: 1; text-align: center; }
.tabs { display: flex; align-items: flex-end; padding-left: 5px; border-bottom: 1px solid #839ec3; height: 32px; }
.tabs button { height: 27px; padding: 0 13px; border: 1px solid #839ec3; border-bottom: 0; border-left: 0; background: linear-gradient(#b3c8e2, #a7bcd9); }
.tabs button:first-child { border-left: 1px solid #839ec3; }
.tabs button.on { height: 30px; padding: 0 14px; margin-bottom: -1px; background: #cfdcee; }
.side-body { flex: 1; min-height: 0; display: flex; }
.tree { width: 405px; display: flex; flex-direction: column; border: 1px solid #839ec3; border-top: 0; background: #fff; }
.tree-head { display: flex; height: 36px; border-bottom: 1px solid #839ec3; background: linear-gradient(#f0f5fc, #dfe9f6); }
.tree-head .col { flex: 1; padding: 9px 5px; border-right: 1px solid #839ec3; }
.tree-head .end { width: 21px; }
.num { flex: none; width: 32px; display: flex; align-items: center; justify-content: center; border-right: 1px solid #839ec3; }
.tree-main { flex: 1; min-height: 0; display: flex; }
.tree-rows { flex: 1; min-width: 0; display: flex; flex-direction: column; overflow: hidden; border-right: 1px solid #bcd2ef; }
.filter { flex: none; height: 35px; display: flex; border-bottom: 1px solid #839ec3; box-shadow: inset 0 -6px #eaf2fb; }
.filter .num { height: 29px; background: #eaf2fb; border-bottom: 1px solid #839ec3; }
.abc { display: flex; align-items: center; gap: 1px; height: 28px; padding-left: 5px; font: bold 8px/13px "Liberation Mono", monospace; color: #6c7fa8; }
.abc i { font-style: normal; }
.abc b { padding: 0 2px; background: #3fae49; color: #fff; }
.rows { flex: 1; min-height: 0; overflow: hidden; color: #000; font-family: "Noto Sans", sans-serif; font-size: 12px; }
.rows li { display: flex; height: 29px; }
.rows .num { background: #eaf2fb; border-bottom: 1px solid #839ec3; color: #1e395b; font-size: 11px; }
.rows label { flex: 1; min-width: 0; display: flex; align-items: center; padding-left: 18px; }
.rows label:has(.tw) { padding-left: 4px; }
.tw { width: 7px; height: 29px; margin-right: 6px; background: url("data:image/svg+xml,%3Csvg xmlns='http://www.w3.org/2000/svg' width='7' height='5'%3E%3Cpath d='M.5 .5l3 3 3-3' fill='none' stroke='%234c5a78' stroke-width='2'/%3E%3C/svg%3E") center no-repeat; }
.t { flex: 1; height: 29px; margin-left: 2px; padding: 6px 0 0 3px; border-left: 1px solid #bcd2ef; border-bottom: 1px solid #bcd2ef; overflow: hidden; white-space: nowrap; }
.sel .t { background: #e1ebf6; }
.root { font-weight: bold; }
.root em { font-style: normal; color: #6b6b6b; margin-right: 9px; font-size: 13px; }
.site { color: #0071c5; }
.l1 label:has(.tw) { padding-left: 20px; } .l2 label:has(.tw) { padding-left: 36px; } .l3 label:has(.tw) { padding-left: 52px; } .l4 label:has(.tw) { padding-left: 68px; }
.l5 label:has(.tw) { padding-left: 84px; } .l6 label:has(.tw) { padding-left: 100px; } .l7 label:has(.tw) { padding-left: 116px; } .l8 label { padding-left: 145px; }

.vscroll { width: 21px; display: flex; flex-direction: column; align-items: center; background: linear-gradient(90deg, #cddaea, #dce7f4); }
.vscroll > i, .hscroll > i { width: 0; height: 0; border: 5px solid transparent; }
.vscroll .up { margin: 8px 0; border-bottom-color: #4c5a85; border-top: 0; }
.vscroll .dn { margin: auto 0 8px; border-top-color: #4c5a85; border-bottom: 0; }
.thumb { width: 19px; display: flex; align-items: center; justify-content: center; border: 1px solid #8aa6cc; border-radius: 2px; background: linear-gradient(90deg, #dbe7f5, #b9cbe2); }
.thumb.tall { height: 214px; } .thumb.short { height: 34px; }
.thumb i { width: 7px; height: 7px; background: repeating-linear-gradient(#7f98c0 0 1px, transparent 1px 2px); }
.hscroll { height: 22px; display: flex; align-items: center; justify-content: space-between; padding: 0 28px 0 4px; background: #d5e1f0; }
.hscroll .lf { border-right-color: #4c5a85; border-left: 0; margin-left: 4px; }
.hscroll .rt { border-left-color: #4c5a85; border-right: 0; }

.tools { display: flex; flex-direction: column; align-items: center; }
.tools > button { width: 100%; height: 30px; }
.tools .grip { margin: 4px 0 7px; }
.tools .more { height: 16px; margin-top: 5px; border-top: 1px solid #a9bbd6; border-bottom: 1px solid #a9bbd6; }
.side .tools { width: 33px; height: 157px; margin-top: 4px; padding-left: 2px; border-top: 1px solid #a9bbd6; background: linear-gradient(90deg, #e9f1fa, #d3e0f0); align-self: flex-start; }
.side-foot { height: 53px; display: flex; align-items: center; gap: 2px; padding: 5px 0 0 4px; }
.side-foot button { width: 44px; height: 40px; }
.side-foot .pressed { width: 40px; border: 1px solid #7f9cc4; background: #9fb6d6; }

/* Main area */
.main { flex: 1; min-width: 0; display: flex; flex-direction: column; }
.doctabs { display: flex; align-items: flex-end; height: 30px; padding: 0 10px 0 4px; border-bottom: 1px solid #839ec3; }
.doctab { height: 28px; margin-bottom: -1px; padding: 0 9px 0 10px; gap: 14px; border: 1px solid #839ec3; border-bottom: 0; background: #cfdcee; color: #6478a8; }
.doctabs .caret { margin-bottom: 13px; }
.view { flex: 1; min-height: 200px; position: relative; margin-left: 1px; border: 1px solid #808890; border-right: 0; }
.scene { display: block; width: 100%; height: 100%; }
.scene text { font-family: "DejaVu Sans Condensed", sans-serif; }
.scene .ax { font-size: 16px; }
.scene .og { font-size: 15px; fill: #000; stroke: #fff; stroke-width: 3px; paint-order: stroke; }
.scene .cube { font-size: 11px; font-weight: bold; fill: #fff; } .scene .cube.sm { font-size: 9px; }
.scene .nesw { font-size: 16px; font-weight: bold; fill: #2d4358; stroke: #cfe2f2; stroke-width: 1px; paint-order: stroke; }
.nav3d { position: absolute; left: 561px; bottom: 9px; display: flex; gap: 13px; }
.nav3d svg { width: 32px; height: 32px; fill: none; stroke: #6e7378; stroke-width: 2; }
.nav3d .b { stroke-width: 5; } .nav3d .n { stroke-width: 2.500; }
.nav3d .dim { opacity: .45; }
.split { height: 14px; display: flex; justify-content: center; padding: 5px 0 0 2px; }
.lowtabs { display: flex; height: 31px; padding-left: 3px; border-bottom: 2px solid #839ec3; }
.lowtabs button { height: 30px; width: 78px; border: 1px solid #839ec3; border-bottom: 0; background: #cfdcee; }
.form { display: flex; height: 71px; border-bottom: 2px solid #839ec3; }
.group { width: 304px; height: 67px; margin: 1px 0 0 1px; padding: 18px 14px; border: 1px solid #839ec3; border-radius: 2px; }
.group h2 { font: 24px/28px "Liberation Sans", Arial, sans-serif; color: #dc6400; }
.fields { flex: 1; padding: 9px 1px 0 9px; display: flex; flex-direction: column; gap: 9px; }
.line { display: flex; align-items: center; height: 22px; }
.line .lab { width: 52px; }
.line .r { margin-right: 8px; }
.line .und { margin-left: 18px; }
.line strong { color: #3d66e0; }
.combo { display: flex; height: 22px; border: 1px solid #839ec3; }
.combo input { flex: 1; min-width: 0; width: 20px; padding: 0 3px; border: 0; background: none; color: #000; outline: 0; }
.combo button { width: 20px; border-left: 1px solid #839ec3; background: linear-gradient(#dbe7f5, #c6d7ec); }
.grow { flex: 1; }
.grow input { background: #fff; font-size: 12px; }
.w-date { width: 98px; }
.w-und { width: 73px; }
.w-und input { text-align: center; }
.w-und button { background: #cfdcee; }
.err { margin: 0 3px; }

/* Measurement grid */
.gridbox { display: flex; margin: 2px 0 2px 2px; padding: 1px; border: 1px solid #839ec3; }
.grid { flex: 1; width: 100%; table-layout: fixed; border-collapse: separate; border-spacing: 0; border: 1px solid #839ec3; border-right: 0; background: #fff; color: #000; font-family: "Noto Sans", sans-serif; font-size: 12px; }
.c34 { width: 34px; } .c70 { width: 70px; } .c106 { width: 106px; } .c88 { width: 88px; } .c94 { width: 94px; } .c129 { width: 129px; } .c181 { width: 181px; } .c22 { width: 22px; }
.grid th, .grid td { padding: 0 4px; border-right: 1px solid #bcd2ef; border-bottom: 1px solid #bcd2ef; white-space: nowrap; overflow: hidden; }
.grid th { font-weight: normal; color: #1e395b; border-color: #839ec3; text-align: center; }
.grid thead th { background: linear-gradient(#eff5fc, #deeaf7); }
.grid thead .l { text-align: left; padding-left: 5px; }
.h1 th { height: 24px; }
.h2 th { height: 44px; }
.h2 label { display: flex; flex-direction: column; align-items: center; gap: 3px; padding-top: 4px; }
.grid tbody th, .grid tbody td { height: 25px; }
.grid tbody th { background: #eaf2fb; font-size: 10px; text-align: left; padding-left: 8px; }
.grid tbody .sel td { background: #e1ebf6; }
.grid .n { text-align: right; padding-right: 3px; }
.grid .tot { text-align: right; font-size: 14px; padding-right: 3px; }
.grid tbody .sel .edit { padding: 0; background: #fff; }
.edit span { display: flex; height: 24px; }
.edit input { flex: 1; min-width: 0; border: 0; padding: 0 4px; outline: 0; }
.edit button { width: 21px; border: 1px solid #839ec3; background: linear-gradient(#dbe7f5, #c6d7ec); }
.grid tbody .cut th, .grid tbody .cut td { height: 7px; border-bottom-color: #839ec3; }
.grid tbody td.sb { padding: 0; border-color: #839ec3; vertical-align: top; }
.sb .vscroll { height: 256px; }
.grid tfoot td { height: 28px; padding: 0 0 0 8px; border: 0; background: linear-gradient(#eff5fc, #deeaf7); color: #1e395b; font: bold 14px/20px "DejaVu Sans Condensed", sans-serif; }
.grid tfoot .sum { padding-right: 0; text-align: right; }
.sum span { display: inline-block; padding: 2px 3px; border-right: 1px solid #839ec3; }
.grid tfoot td:last-child { border-right: 1px solid #839ec3; }
.gridbox .tools { flex: none; width: 36px; height: 224px; background: linear-gradient(90deg, #e9f1fa, #d3e0f0); }
.tools hr { width: 32px; margin: 4px 0 5px; border: 0; border-top: 1px solid #a9bbd6; }
.gridbox .tools > .more { height: 20px; margin-top: 2px; }
.tools .font-a { font: bold 24px/24px "Liberation Serif", serif; color: #2f5f94; }

/* Bottom navigation */
.bottom { flex: none; display: flex; align-items: center; gap: 7px; height: 34px; margin-bottom: 1px; padding: 0 8px; border-top: 1px solid #839ec3; border-bottom: 1px solid #839ec3; background: linear-gradient(#e6eef8, #c6d6ea 50%, #adc0d9); }
.bottom button { height: 30px; padding: 0 8px 0 0; gap: 4px; font-family: "Noto Sans", sans-serif; font-size: 14px; margin-right: 8px; }
.bottom .on { width: 115px; padding-left: 6px; margin-right: 0; justify-content: flex-start; border: 1px solid #c79a3c; border-radius: 3px; background: linear-gradient(#fde68a, #ffd164 50%, #fff08a); }
```
